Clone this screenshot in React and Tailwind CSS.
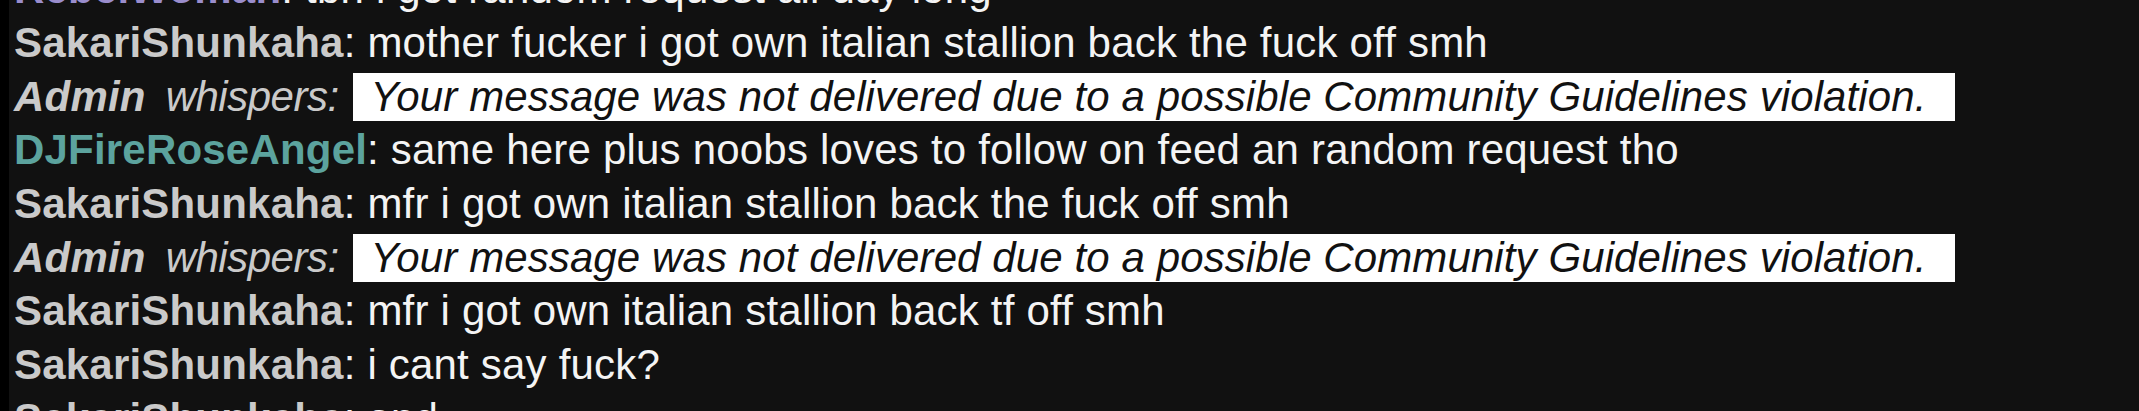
import React from 'react';

const WARNING = 'Your message was not delivered due to a possible Community Guidelines violation.';

const messages = [
    { name: 'RebelWoman', color: 'text-[#9a8dcc]', text: 'tbh i got random request all day long' },
    { name: 'SakariShunkaha', color: 'text-[#cacaca]', text: 'mother fucker i got own italian stallion back the fuck off smh' },
    { whisper: true },
    { name: 'DJFireRoseAngel', color: 'text-[#5ca39e]', text: 'same here plus noobs loves to follow on feed an random request tho' },
    { name: 'SakariShunkaha', color: 'text-[#cacaca]', text: 'mfr i got own italian stallion back the fuck off smh' },
    { whisper: true },
    { name: 'SakariShunkaha', color: 'text-[#cacaca]', text: 'mfr i got own italian stallion back tf off smh' },
    { name: 'SakariShunkaha', color: 'text-[#cacaca]', text: 'i cant say fuck?' },
    { name: 'SakariShunkaha', color: 'text-[#cacaca]', text: 'and' },
];

export default function App() {
    return (
        <div className="h-[411px] w-full overflow-hidden bg-[#111111] flex">
            {/* left edge of the chat pane */}
            <div className="w-[9px] shrink-0 bg-black"></div>

            <div className="flex-1 pl-[5px] mt-[-37.7px] font-['Liberation_Sans',Arial,sans-serif] text-[42px] tracking-[0.2px] text-[#f4f4f4]">
                {messages.map((msg, index) => {
                    if (msg.whisper) {
                        return (
                            <div key={index} className="flex items-center h-[53.7px] leading-[53.7px] whitespace-pre">
                                <span className="italic font-bold text-[#cacaca]">Admin</span>
                                <span className="italic text-[#cacaca] ml-[20px] mr-[14px] tracking-[-0.5px]">whispers:</span>
                                <span className="italic bg-white text-[#111111] h-[48px] leading-[48px] pl-[18px] pr-[29px] tracking-[0.1px]">
                                    {WARNING}
                                </span>
                            </div>
                        );
                    }
                    return (
                        <div key={index} className="flex items-center h-[53.7px] leading-[53.7px] whitespace-pre">
                            <span className={`font-bold ${msg.color}`}>{msg.name}</span>
                            <span>: {msg.text}</span>
                        </div>
                    );
                })}
            </div>
        </div>
    );
}
